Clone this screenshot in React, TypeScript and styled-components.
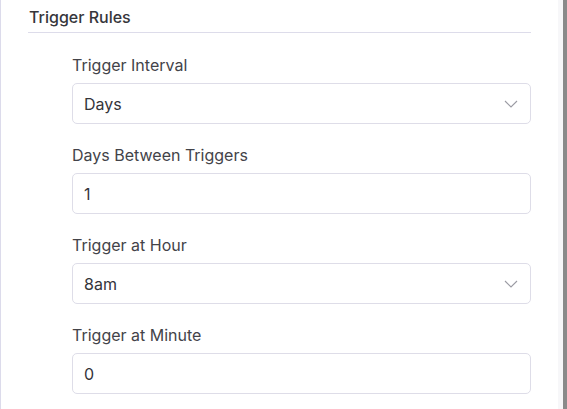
import React from 'react';
import styled, { createGlobalStyle } from 'styled-components';

const GlobalStyle = createGlobalStyle`
  html, body {
    margin: 0;
    padding: 0;
    background: #ffffff;
    font-family: Inter, "Noto Sans", sans-serif;
    overflow: hidden;
  }
`;

const Frame = styled.div`
  display: flex;
  width: 567px;
  height: 409px;
`;

const Panel = styled.div`
  flex: 1;
  border-left: 1px solid #dcdbeb;
  padding-left: 27px;
  background: #ffffff;
`;

const Gutter = styled.div`
  width: 5px;
  background: #f7f7f9;
`;

const ScrollThumb = styled.div`
  width: 4px;
  background: #8a8a8a;
`;

const Section = styled.section`
  width: 503px;
`;

const SectionTitle = styled.h2`
  margin: 0;
  padding: 7px 0 5px 1px;
  font-size: 16px;
  line-height: 20px;
  font-weight: 500;
  color: #36363b;
  border-bottom: 1px solid #dddcea;
`;

const Fields = styled.div`
  display: flex;
  flex-direction: column;
  gap: 21px;
  padding: 22px 0 0 44px;
`;

const Field = styled.div`
  display: flex;
  flex-direction: column;
  gap: 8px;
`;

const Label = styled.label`
  font-size: 16px;
  line-height: 20px;
  color: #434349;
`;

const Box = styled.div`
  box-sizing: border-box;
  height: 41px;
  display: flex;
  align-items: center;
  justify-content: space-between;
  padding: 0 12px 0 11px;
  border: 1px solid #dedde8;
  border-radius: 5px;
  font-size: 16px;
  color: #34343a;
`;

const Chevron = () => (
  <svg width="14" height="8" viewBox="0 0 14 8" fill="none">
    <path d="M1 1l6 6 6-6" stroke="#9b9ba3" strokeWidth="1.1" />
  </svg>
);

type FieldDef = { label: string; value: string; select?: boolean };

const fields: FieldDef[] = [
  { label: 'Trigger Interval', value: 'Days', select: true },
  { label: 'Days Between Triggers', value: '1' },
  { label: 'Trigger at Hour', value: '8am', select: true },
  { label: 'Trigger at Minute', value: '0' },
];

export default function App() {
  return (
    <>
      <GlobalStyle />
      <Frame>
        <Panel>
          <Section>
            <SectionTitle>Trigger Rules</SectionTitle>
            <Fields>
              {fields.map((f) => (
                <Field key={f.label}>
                  <Label>{f.label}</Label>
                  <Box>
                    <span>{f.value}</span>
                    {f.select && <Chevron />}
                  </Box>
                </Field>
              ))}
            </Fields>
          </Section>
        </Panel>
        <Gutter />
        <ScrollThumb />
      </Frame>
    </>
  );
}
